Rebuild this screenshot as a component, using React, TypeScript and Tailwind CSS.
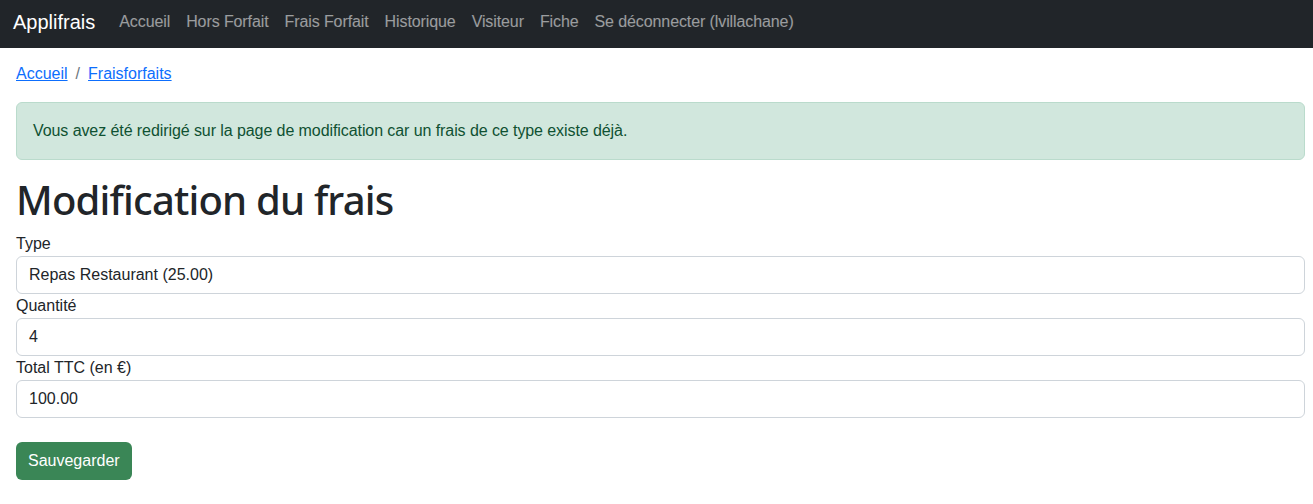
import React from 'react';

const navLinks = ['Accueil', 'Hors Forfait', 'Frais Forfait', 'Historique', 'Visiteur', 'Fiche', 'Se déconnecter (lvillachane)'];

function Field({ label, value }: { label: string; value: string }) {
  return (
    <div>
      <label className="block text-base leading-6 text-[#212529]">{label}</label>
      <div className="h-[38px] flex items-center px-3 border border-[#ced4da] rounded-md bg-white text-base text-[#212529]">
        {value}
      </div>
    </div>
  );
}

export default function App() {
  return (
    <div className="min-h-screen bg-white font-['Liberation_Sans',Arial,sans-serif] text-[#212529]">
      {/* Navbar */}
      <nav className="h-12 bg-[#212529] flex items-center pl-[13px] pb-1">
        <span className="text-xl text-white mr-4">Applifrais</span>
        <div className="flex">
          {navLinks.map((l) => (
            <a key={l} className="px-2 text-base tracking-[-0.1px] text-white/55">{l}</a>
          ))}
        </div>
      </nav>

      <div className="pl-4 pr-2 pt-[14px]">
        {/* Breadcrumb */}
        <div className="flex items-center text-base leading-6 mb-4">
          <a className="text-[#0d6efd] underline">Accueil</a>
          <span className="px-2 text-[#6c757d]">/</span>
          <a className="text-[#0d6efd] underline">Fraisforfaits</a>
        </div>

        {/* Alert */}
        <div className="bg-[#d1e7dd] border border-[#badbcc] text-[#0f5132] rounded-md p-4 leading-6 mb-4 tracking-[-0.08px]">
          Vous avez été redirigé sur la page de modification car un frais de ce type existe déjà.
        </div>

        <h1 className="font-['Noto_Sans',sans-serif] text-[40px] leading-[48px] font-medium tracking-[-0.8px] mb-2">Modification du frais</h1>

        <div>
          <Field label="Type" value="Repas Restaurant (25.00)" />
          <Field label="Quantité" value="4" />
          <Field label="Total TTC (en €)" value="100.00" />
        </div>

        <button className="mt-6 h-[38px] px-3 rounded-md bg-[#3a8656] text-white text-base">
          Sauvegarder
        </button>
      </div>
    </div>
  );
}
